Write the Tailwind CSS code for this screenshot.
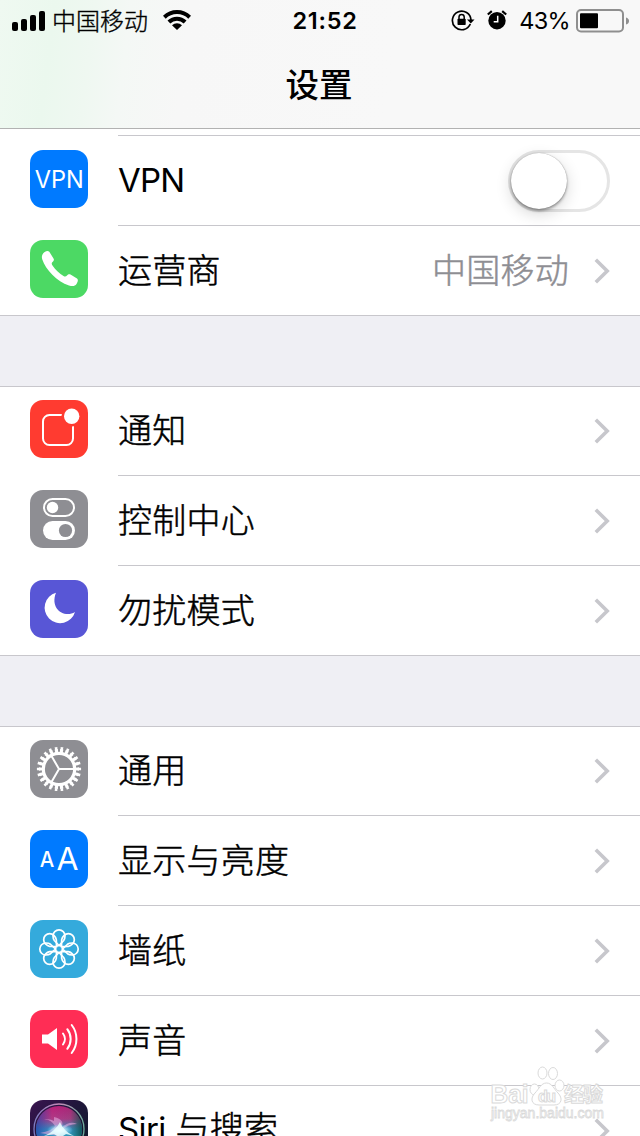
<!DOCTYPE html>
<html lang="zh-CN">
<head>
<meta charset="utf-8">
<title>设置</title>
<script src="https://cdn.jsdelivr.net/npm/@tailwindcss/browser@4"></script>
</head>
<body class="w-[640px] h-[1136px] overflow-hidden bg-white text-black font-['Inter','Noto_Sans_CJK_SC',sans-serif]">
<svg class="hidden">
  <defs>
    <symbol id="chev" viewBox="0 0 16 26"><path d="M1.800 1.800 13.200 13 1.800 24.200" fill="none" stroke="#c7c7cc" stroke-width="3.600"/></symbol>
    <path id="petal" d="M0-3.500L-4.700-8.500C-5.800-10-6-11.500-6-13.200A6 6 0 0 1 6-13.200C6-11.500 5.800-10 4.700-8.500Z"/>
  </defs>
</svg>
<div class="relative flex flex-col w-[640px] h-[1136px] overflow-hidden">

  <header class="h-[129px] shrink-0 border-b border-[#b2b2b2] bg-[#f8f8f8] bg-[linear-gradient(97deg,#eff9f1_0px,#ebf8ee_55px,#eff8f1_95px,#f4f8f5_130px,#f7f7f7_190px,#f8f8f8_400px)]">
    <div class="grid grid-cols-3 h-10 items-center pl-3 pr-[11px]">
      <div class="flex items-center">
        <svg class="w-[33px] h-5" viewBox="0 0 33 20"><rect y="11" width="6" height="9" rx="2"/><rect x="9" y="8" width="6" height="12" rx="2"/><rect x="18" y="4" width="6" height="16" rx="2"/><rect x="27" width="6" height="20" rx="2"/></svg>
        <span class="ml-[7px] text-[24px] leading-10 -mt-[2px] whitespace-nowrap font-light [-webkit-text-stroke:0.35px] font-['Noto_Sans_CJK_SC',sans-serif]">中国移动</span>
        <svg class="ml-[15px] -mt-[2px] w-7 h-5" viewBox="0 0 28 20"><g fill="none" stroke="#000" stroke-width="4"><path d="M1.300 7.200A18.200 18.200 0 0 1 26.700 7.200"/><path d="M5.900 12A11.600 11.600 0 0 1 22.100 12"/></g><path d="M9 15.200A7.200 7.200 0 0 1 19 15.200L14 20Z"/></svg>
      </div>
      <div class="text-center text-[23.500px] font-semibold leading-10 tracking-[0.7px] pt-px pl-[9px]">21:52</div>
      <div class="flex items-center justify-end">
        <svg class="w-6 h-[22px] -mt-[2px]" viewBox="0 0 24 22"><path d="M19.300 15A9.300 9.300 0 1 1 20 11" fill="none" stroke="#000" stroke-width="1.700"/><path d="M16 10.500h7.500L19.800 14.500Z"/><rect x="6.500" y="9.700" width="8.200" height="6.300" rx=".7"/><path d="M8 10V8a2.600 2.600 0 0 1 5.200 0v2" fill="none" stroke="#000" stroke-width="1.500"/></svg>
        <svg class="ml-3 -mt-[2px] w-5 h-5" viewBox="0 0 20 20"><circle cx="10" cy="10.700" r="8.700"/><path d="M.8 4.500 4.800 1.200M19.200 4.500 15.200 1.200" stroke="#000" stroke-width="2.200" fill="none"/><path d="M10.700 5.700v6h-4" fill="none" stroke="#fff" stroke-width="1.500"/></svg>
        <span class="ml-3 text-[23.500px] leading-10 tracking-[-0.7px]">43%</span>
        <svg class="ml-[6px] w-[53px] h-6 shrink-0" viewBox="0 0 53 24"><rect x="1" y="1" width="46" height="21.500" rx="4" fill="none" stroke="#8f8f8f" stroke-width="2"/><rect x="4" y="4.300" width="18" height="15" rx="1"/><path d="M50 8.500q3 1 3 3.500t-3 3.500Z" fill="#8f8f8f"/></svg>
      </div>
    </div>
    <h1 class="pr-[2px] text-center text-[33.500px] leading-[86px] font-medium font-['Noto_Sans_CJK_SC',sans-serif]">设置</h1>
  </header>

  <main class="flex flex-col">
    <section class="border-b border-[#c8c7cc] pt-[6px]">
      <div class="ml-[118px] h-px bg-[#c8c7cc]"></div>
      <div class="flex h-[90px] pl-[30px]">
        <svg class="mt-[14px] size-[58px]" viewBox="0 0 58 58"><rect width="58" height="58" rx="13" fill="#007aff"/><text x="29.200" y="38" text-anchor="middle" font-family="Inter" font-size="24.500" textLength="49" lengthAdjust="spacingAndGlyphs" fill="#fff">VPN</text></svg>
        <div class="ml-[30px] flex flex-1 items-center justify-between border-b border-[#c8c7cc] pr-[30px]">
          <span class="text-[33px] leading-none tracking-[-0.8px]">VPN</span>
          <div class="flex h-[62px] w-[102px] items-center rounded-full border-[3px] border-[#e5e5e5]"><div class="size-[56px] rounded-full bg-white shadow-[0_5px_16px_rgba(0,0,0,.16),0_2px_3px_rgba(0,0,0,.35),0_0_1px_rgba(0,0,0,.4)]"></div></div>
        </div>
      </div>
      <div class="flex h-[89px] pl-[30px] text-[34px] leading-none font-light [-webkit-text-stroke:0.5px] tracking-[0.25px]">
        <svg class="mt-[14px] size-[58px]" viewBox="0 0 58 58"><rect width="58" height="58" rx="13" fill="#4cd964"/><path d="M12.500 14.500C14 11.500 17.500 10 19.300 11.700L23.500 18.500C24.400 20 23.800 20.800 22.500 22C21.300 23.200 21.600 24 22.500 25.500C25.500 30 29.500 33.500 33.500 36C35 36.900 36 36.600 37 35.500C38 34.400 39 33.800 40.500 34.500L47 38.500C48.500 39.500 47.800 42 46.500 44C45 46.300 42.500 46.500 39 45.500C27 41.500 15.500 29.500 12.300 19.500C11.700 17.500 11.700 16 12.500 14.500Z" fill="#fff"/></svg>
        <div class="ml-[30px] flex flex-1 items-center pr-[30px]">
          <span class="flex-1">运营商</span><span class="mr-[25px] text-[#8e8e93]">中国移动</span><svg class="w-4 h-[26px] mt-px"><use href="#chev"/></svg>
        </div>
      </div>
    </section>

    <div class="h-[70px] bg-[#efeff4]"></div>

    <section class="border-y border-[#c8c7cc] text-[34px] leading-none font-light [-webkit-text-stroke:0.5px] tracking-[0.25px]">
      <div class="flex h-[89px] pl-[30px]">
        <svg class="mt-[13px] size-[58px]" viewBox="0 0 58 58"><rect width="58" height="58" rx="13" fill="#ff3b30"/><rect x="13" y="15" width="30" height="30" rx="6.500" fill="none" stroke="#fff" stroke-width="2"/><circle cx="41.700" cy="16.300" r="10.300" fill="#ff3b30"/><circle cx="41.700" cy="16.300" r="7.700" fill="#fff"/></svg>
        <div class="ml-[30px] flex flex-1 items-center justify-between border-b border-[#c8c7cc] pr-[30px]"><span>通知</span><svg class="w-4 h-[26px]"><use href="#chev"/></svg></div>
      </div>
      <div class="flex h-[90px] pl-[30px]">
        <svg class="mt-[14px] size-[58px]" viewBox="0 0 58 58"><rect width="58" height="58" rx="13" fill="#8e8e93"/><rect x="14" y="9" width="30" height="17" rx="8.500" fill="none" stroke="#fff" stroke-width="2"/><circle cx="22.500" cy="17.500" r="5.700" fill="#fff"/><rect x="13" y="31" width="32" height="19" rx="9.500" fill="#fff"/><circle cx="35.500" cy="40.500" r="6.600" fill="#8e8e93"/></svg>
        <div class="ml-[30px] flex flex-1 items-center justify-between border-b border-[#c8c7cc] pr-[30px]"><span>控制中心</span><svg class="w-4 h-[26px] mt-px"><use href="#chev"/></svg></div>
      </div>
      <div class="flex h-[89px] pl-[30px]">
        <svg class="mt-[14px] size-[58px]" viewBox="0 0 58 58"><rect width="58" height="58" rx="13" fill="#5856d6"/><path d="M26 12.700A15.500 15.500 0 1 0 45 32C34.500 38.500 19.500 29 26 12.700Z" fill="#fff"/></svg>
        <div class="ml-[30px] flex flex-1 items-center justify-between pr-[30px]"><span>勿扰模式</span><svg class="w-4 h-[26px] mt-px"><use href="#chev"/></svg></div>
      </div>
    </section>

    <div class="h-[70px] bg-[#efeff4]"></div>

    <section class="border-t border-[#c8c7cc] text-[34px] leading-none font-light [-webkit-text-stroke:0.5px] tracking-[0.25px]">
      <div class="flex h-[89px] pl-[30px]">
        <svg class="mt-[13px] size-[58px]" viewBox="0 0 58 58"><rect width="58" height="58" rx="13" fill="#8e8e93"/><g fill="none" stroke="#fff"><circle cx="29" cy="29" r="15.700" stroke-width="3.200"/><circle cx="29" cy="29" r="18.300" stroke-width="3.600" pathLength="22" stroke-dasharray=".6 .4" stroke-dashoffset=".3"/><circle cx="29" cy="29" r="20.700" stroke-width="2.800" pathLength="22" stroke-dasharray=".44 .56" stroke-dashoffset=".22"/><path d="M29 29H44M29 29 21.500 16M29 29 21.500 42" stroke-width="2"/></g></svg>
        <div class="ml-[30px] flex flex-1 items-center justify-between border-b border-[#c8c7cc] pr-[30px]"><span>通用</span><svg class="w-4 h-[26px]"><use href="#chev"/></svg></div>
      </div>
      <div class="flex h-[90px] pl-[30px]">
        <svg class="mt-[14px] size-[58px] [-webkit-text-stroke:0px]" viewBox="0 0 58 58"><rect width="58" height="58" rx="13" fill="#007aff"/><g fill="#fff" font-family="Inter" font-weight="400" letter-spacing="0"><text x="9.700" y="37" font-size="21" font-weight="500" textLength="14.500" lengthAdjust="spacingAndGlyphs">A</text><text x="26.500" y="40" font-size="31.500" textLength="22" lengthAdjust="spacingAndGlyphs">A</text></g></svg>
        <div class="ml-[30px] flex flex-1 items-center justify-between border-b border-[#c8c7cc] pr-[30px]"><span>显示与亮度</span><svg class="w-4 h-[26px] mt-px"><use href="#chev"/></svg></div>
      </div>
      <div class="flex h-[90px] pl-[30px]">
        <svg class="mt-[14px] size-[58px]" viewBox="0 0 58 58"><rect width="58" height="58" rx="13" fill="#34aadc"/><g transform="translate(29 29)" fill="none" stroke="#fff" stroke-width="1.700"><use href="#petal"/><use href="#petal" transform="rotate(45)"/><use href="#petal" transform="rotate(90)"/><use href="#petal" transform="rotate(135)"/><use href="#petal" transform="rotate(180)"/><use href="#petal" transform="rotate(225)"/><use href="#petal" transform="rotate(270)"/><use href="#petal" transform="rotate(315)"/><circle r="3.500"/></g></svg>
        <div class="ml-[30px] flex flex-1 items-center justify-between border-b border-[#c8c7cc] pr-[30px]"><span>墙纸</span><svg class="w-4 h-[26px] mt-px"><use href="#chev"/></svg></div>
      </div>
      <div class="flex h-[90px] pl-[30px]">
        <svg class="mt-[14px] size-[58px]" viewBox="0 0 58 58"><rect width="58" height="58" rx="13" fill="#ff2d55"/><path d="M12 24.500h6L27 18v22l-9-6.500h-6Z" fill="#fff"/><g fill="none" stroke="#fff" stroke-width="2" stroke-linecap="round"><path d="M33 23.500a9 9 0 0 1 0 11M37.300 19.200a16 16 0 0 1 0 19.600M41.700 15a23 23 0 0 1 0 28"/></g></svg>
        <div class="ml-[30px] flex flex-1 items-center justify-between border-b border-[#c8c7cc] pr-[30px]"><span>声音</span><svg class="w-4 h-[26px] mt-px"><use href="#chev"/></svg></div>
      </div>
      <div class="flex h-[90px] pl-[30px]">
        <svg class="mt-[14px] size-[58px]" viewBox="0 0 58 58">
          <defs>
            <linearGradient id="sbg" x2="1" y2="1"><stop stop-color="#3a1450"/><stop offset=".5" stop-color="#1d1638"/><stop offset="1" stop-color="#0c1c28"/></linearGradient>
            <linearGradient id="orb" x1=".5" x2=".5" y2="1"><stop stop-color="#b82078"/><stop offset=".28" stop-color="#b03a86"/><stop offset=".5" stop-color="#3c8fc0"/><stop offset="1" stop-color="#1ac0c8"/></linearGradient>
            <linearGradient id="side"><stop stop-color="#2440a8" stop-opacity=".75"/><stop offset=".35" stop-color="#2440a8" stop-opacity="0"/><stop offset=".75" stop-color="#0c5c50" stop-opacity=".1"/><stop offset="1" stop-color="#0a4a48" stop-opacity=".85"/></linearGradient>
            <radialGradient id="glow"><stop stop-color="#fff"/><stop offset=".35" stop-color="#d8f6ff" stop-opacity=".85"/><stop offset="1" stop-color="#7fe0ff" stop-opacity="0"/></radialGradient>
            <linearGradient id="rim"><stop stop-color="#7d7ac0"/><stop offset=".5" stop-color="#c58ab8"/><stop offset="1" stop-color="#6fae9c"/></linearGradient>
          </defs>
          <rect width="58" height="58" rx="13" fill="url(#sbg)"/>
          <circle cx="29" cy="29" r="23" fill="url(#orb)"/><circle cx="29" cy="29" r="23" fill="url(#side)"/>
          <circle cx="29" cy="29" r="25" fill="none" stroke="url(#rim)" stroke-width="1.300"/>
          <path d="M14 19Q27 18 30 29Q23 25 24 17Q36 20 31 28Q40 20 47 24Q38 24 32 30L29 36 10 33Q22 31 25 26Q22 20 14 19Z" fill="#e5a6dc" fill-opacity=".6"/>
          <ellipse cx="30" cy="30" rx="13" ry="6" fill="url(#glow)"/><path d="M14 36Q26 31 30 22Q33 31 44 36L36 34 30 38 24 34Z" fill="#eaffff" fill-opacity=".85"/>
        </svg>
        <div class="ml-[30px] flex flex-1 items-center justify-between border-b border-[#c8c7cc] pr-[30px]"><span class="-mt-[3px] whitespace-nowrap"><span class="text-[33px] font-normal [-webkit-text-stroke:0px] tracking-[-0.6px]">Siri</span> 与搜索</span><svg class="w-4 h-[26px] mt-px"><use href="#chev"/></svg></div>
      </div>
    </section>
  </main>

  <svg class="absolute left-[486px] top-[1062px] w-[124px] h-[64px]" viewBox="0 0 124 64">
    <g fill="#fff" stroke="#dadada" stroke-width="1" font-family="Liberation Sans, Noto Sans CJK SC, sans-serif">
      <ellipse cx="48.500" cy="27.500" rx="4.500" ry="5.500"/><ellipse cx="56.500" cy="11" rx="4.500" ry="6"/><ellipse cx="67" cy="11.500" rx="4.500" ry="6"/><ellipse cx="73.500" cy="23.500" rx="4.500" ry="5.500"/>
      <text x="4.500" y="41" font-size="25" font-weight="bold" textLength="38" lengthAdjust="spacingAndGlyphs">Bai</text>
      <path d="M60.500 21C66 21 68 27 72 31C77 36 76 43 68 43H53C45 43 44 36 49 31C53 27 55 21 60.500 21Z"/>
      <text x="52" y="40" font-size="16" font-weight="bold" textLength="18">du</text>
      <text x="78" y="40" font-size="20" font-weight="bold" textLength="39">经验</text>
      <text x="5" y="56" font-size="14" textLength="113" stroke-width=".8" lengthAdjust="spacingAndGlyphs">jingyan.baidu.com</text>
    </g>
  </svg>
</div>
</body>
</html>
